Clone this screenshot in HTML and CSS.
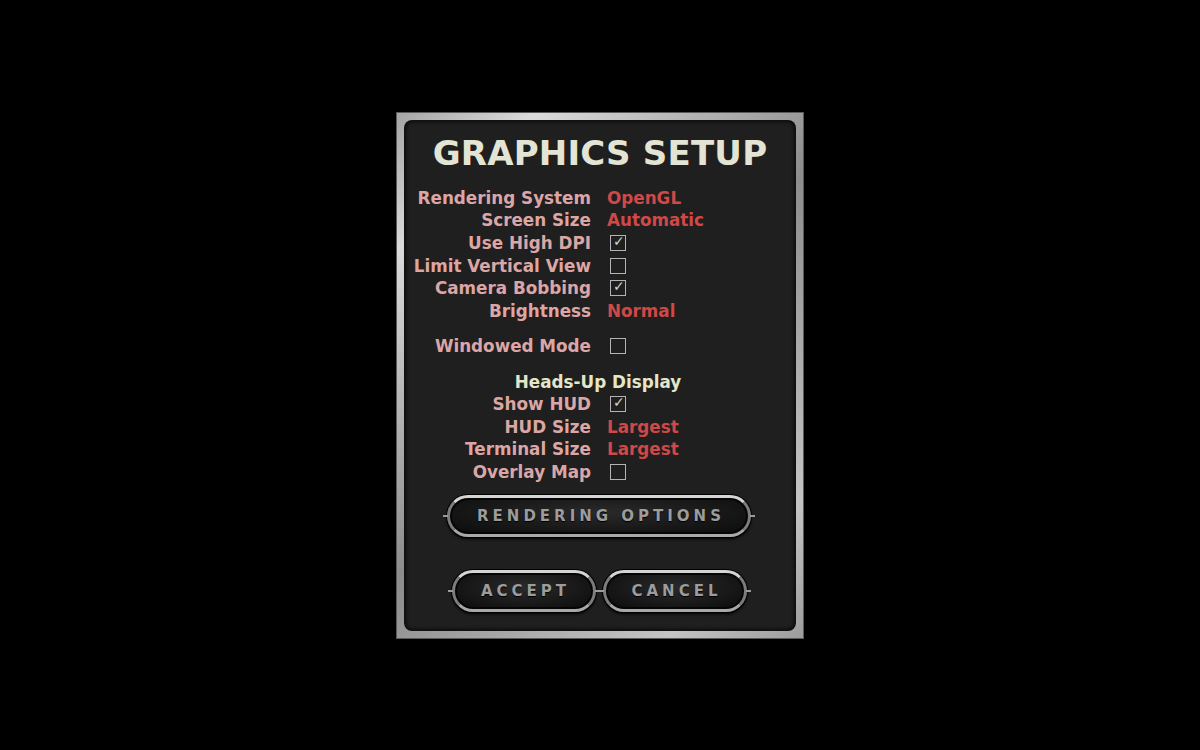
FILE: index.html
```html
<!DOCTYPE html>
<html>
  <head>
    <meta charset="utf-8" />
    <title>Graphics Setup</title>
    <link rel="stylesheet" href="styles.css">
  </head>
  <body>
    <div class="frame">
      <div class="panel">
        <h1 class="title">GRAPHICS SETUP</h1>

        <div class="rows">
          <span class="label">Rendering System</span><span class="value">OpenGL</span>
          <span class="label">Screen Size</span><span class="value">Automatic</span>
          <span class="label">Use High DPI</span><span class="value"><span class="check on"></span></span>
          <span class="label">Limit Vertical View</span><span class="value"><span class="check"></span></span>
          <span class="label">Camera Bobbing</span><span class="value"><span class="check on"></span></span>
          <span class="label">Brightness</span><span class="value">Normal</span>
        </div>

        <div class="rows group">
          <span class="label">Windowed Mode</span><span class="value"><span class="check"></span></span>
        </div>

        <div class="heading">Heads-Up Display</div>
        <div class="rows">
          <span class="label">Show HUD</span><span class="value"><span class="check on"></span></span>
          <span class="label">HUD Size</span><span class="value">Largest</span>
          <span class="label">Terminal Size</span><span class="value">Largest</span>
          <span class="label">Overlay Map</span><span class="value"><span class="check"></span></span>
        </div>

        <div class="buttons">
          <button class="pill wide">RENDERING OPTIONS</button>
        </div>
        <div class="buttons pair">
          <button class="pill">ACCEPT</button>
          <button class="pill">CANCEL</button>
        </div>
      </div>
    </div>
  </body>
</html>
```

FILE: styles.css
```css
body,
html {
  margin: 0;
  padding: 0;
  width: 100%;
  height: 100%;
  overflow: hidden;
}
body {
  background-color: #000;
  display: flex;
  align-items: center;
  justify-content: center;
  font-family: 'DejaVu Sans', Verdana, sans-serif;
}

.frame {
  width: 408px;
  height: 527px;
  box-sizing: border-box;
  padding: 9px;
  background: linear-gradient(135deg, #a4a4a4 0%, #dadada 15%, #8c8c8c 50%, #c4c4c4 85%, #9c9c9c 100%);
  box-shadow: inset 0 0 0 1px #5a5a5a;
}
.panel {
  height: 100%;
  box-sizing: border-box;
  background-color: #1f1f1f;
  border-radius: 7px;
  box-shadow: 0 0 0 1px #111, inset 0 0 4px #000;
  padding-top: 12px;
}

.title {
  margin: 0 0 14px 0;
  text-align: center;
  font-size: 34px;
  font-weight: bold;
  color: #e4e4d4;
  line-height: 40px;
  letter-spacing: 0.2px;
}

.rows {
  display: grid;
  grid-template-columns: 186px 1fr;
  column-gap: 16px;
  grid-auto-rows: 22.6px;
  align-items: center;
  font-size: 16.8px;
  font-weight: bold;
}
.rows.group {
  margin-top: 13px;
}
.label {
  text-align: right;
  color: #dca6a6;
  white-space: nowrap;
}
.value {
  color: #d04848;
  display: flex;
  align-items: center;
}
.heading {
  margin-top: 13px;
  text-align: center;
  font-size: 16.8px;
  font-weight: bold;
  color: #e4e6c8;
  line-height: 22px;
  padding-right: 4px;
}

.check {
  width: 14px;
  height: 14px;
  margin-left: 3px;
  border: 1px solid #b4b4b4;
  position: relative;
}
.check.on::after {
  content: '\2713';
  position: absolute;
  left: 2px;
  top: -3px;
  font-size: 14px;
  font-weight: normal;
  color: #cfcfcf;
}

.buttons {
  display: flex;
  justify-content: center;
  margin-top: 12px;
}
.buttons.pair {
  margin-top: 33px;
  gap: 7px;
  padding-right: 2px;
}
.pill {
  position: relative;
  width: 144px;
  height: 42px;
  border-radius: 21px;
  border: 3px solid #7c7c7c;
  border-top-color: #d4d4d4;
  border-bottom-color: #a8a8a8;
  background: radial-gradient(ellipse at 50% 40%, #2a2a2a 0%, #141414 70%, #0a0a0a 100%);
  box-shadow: 0 0 0 1px #000, inset 0 0 0 2px #050505, 0 2px 3px #000;
  color: #9c9c9c;
  font-family: 'DejaVu Sans', Verdana, sans-serif;
  font-size: 15px;
  font-weight: bold;
  letter-spacing: 4px;
  text-indent: 4px;
  text-shadow: 0 1px 1px #000;
  padding: 0;
}
.pill.wide {
  width: 304px;
  margin-right: 2px;
}
.pill::before,
.pill::after {
  content: '';
  position: absolute;
  top: 50%;
  width: 5px;
  height: 2px;
  margin-top: -1px;
  background-color: #9a9a9a;
}
.pill::before {
  left: -7px;
}
.pill::after {
  right: -7px;
}
```
